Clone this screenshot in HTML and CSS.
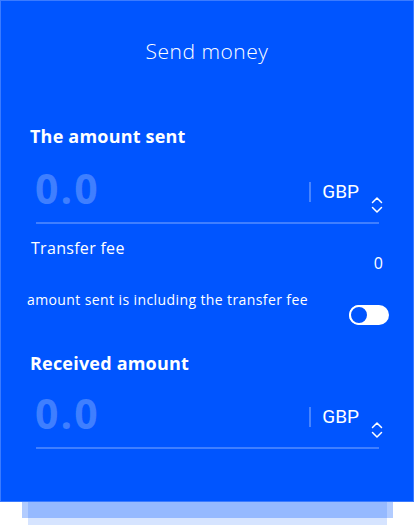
FILE: index.html
```html
<!DOCTYPE html>
<html lang="en">
<head>
<meta charset="utf-8">
<title>Send money</title>
<link rel="stylesheet" href="styles.css">
</head>
<body>
<div class="wrap">
  <div class="card">
    <h1 class="title">Send money</h1>

    <h2 class="label">The amount sent</h2>
    <div class="amount-row">
      <span class="amount">0.0</span>
      <span class="divider"></span>
      <span class="currency">GBP</span>
      <svg class="chev" width="12" height="18" viewBox="0 0 12 18" aria-hidden="true">
        <path d="M1.5 6.5 L6 2 L10.5 6.5" fill="none" stroke="#fff" stroke-width="1.5" stroke-linecap="round" stroke-linejoin="round"/>
        <path d="M1.5 11.5 L6 16 L10.5 11.5" fill="none" stroke="#fff" stroke-width="1.5" stroke-linecap="round" stroke-linejoin="round"/>
      </svg>
    </div>

    <div class="fee">
      <span class="fee-label">Transfer fee</span>
      <span class="fee-value">0</span>
    </div>

    <div class="incl">
      <span class="incl-text">amount sent is including the transfer fee</span>
      <span class="toggle"><span class="knob"></span></span>
    </div>

    <h2 class="label label-2">Received amount</h2>
    <div class="amount-row amount-row-2">
      <span class="amount">0.0</span>
      <span class="divider"></span>
      <span class="currency">GBP</span>
      <svg class="chev" width="12" height="18" viewBox="0 0 12 18" aria-hidden="true">
        <path d="M1.5 6.5 L6 2 L10.5 6.5" fill="none" stroke="#fff" stroke-width="1.5" stroke-linecap="round" stroke-linejoin="round"/>
        <path d="M1.5 11.5 L6 16 L10.5 11.5" fill="none" stroke="#fff" stroke-width="1.5" stroke-linecap="round" stroke-linejoin="round"/>
      </svg>
    </div>
  </div>
  <div class="layer layer-a"></div>
  <div class="layer layer-b"></div>
</div>
</body>
</html>
```

FILE: styles.css
```css
* { box-sizing: border-box; }
html, body { margin: 0; padding: 0; background: #fff; }
body { font-family: "Open Sans", "Liberation Sans", sans-serif; }

.wrap { width: 414px; }

.card {
  position: relative;
  z-index: 1;
  height: 502px;
  background: #0055ff;
  border: 1px solid #3b7bff;
  color: #fff;
  padding: 36px 24px 0 29px;
  display: flex;
  flex-direction: column;
}

.title {
  margin: 0 -24px 0 -29px;
  text-align: center;
  font-size: 21px;
  font-weight: 300;
  line-height: 28px;
  letter-spacing: 0.5px;
}

.label {
  margin: 59px 0 0 0;
  font-size: 18px;
  font-weight: 700;
  line-height: 24px;
  letter-spacing: 0.2px;
}
.label-2 { margin-top: 26px; }

.amount-row {
  display: flex;
  align-items: flex-start;
  margin: 18px 10px 0 6px;
  height: 58px;
  border-bottom: 2px solid rgba(255,255,255,0.25);
}
.amount-row-2 { margin-top: 16px; }
.amount {
  flex: 1;
  margin-left: -1px;
  font-size: 41px;
  font-weight: 700;
  line-height: 44px;
  letter-spacing: 2px;
  color: rgba(255,255,255,0.25);
}
.divider {
  width: 2px;
  height: 20px;
  margin-top: 16px;
  background: rgba(255,255,255,0.28);
}
.currency {
  margin: 13px 0 0 11px;
  font-family: "Roboto", sans-serif;
  font-size: 19px;
  line-height: 26px;
}
.chev { margin: 30px -4px 0 12px; }

.fee {
  display: flex;
  flex-direction: column;
  margin-top: 13px;
}
.fee-label { font-size: 16px; line-height: 22px; letter-spacing: 0.3px; margin-left: 1px; }
.fee-value { align-self: flex-end; font-size: 16px; line-height: 20px; margin: -6px 6px 0 0; }

.incl {
  display: flex;
  justify-content: space-between;
  align-items: flex-start;
  margin: 17px 0 0 -3px;
}
.incl-text { font-size: 14px; line-height: 20px; letter-spacing: 0.4px; }
.toggle {
  margin-top: 15px;
  width: 40px;
  height: 20px;
  border-radius: 10px;
  background: #fff;
  display: flex;
  align-items: center;
}
.knob {
  width: 20px;
  height: 20px;
  border-radius: 50%;
  background: #0055ff;
  border: 2px solid #fff;
}

.layer { height: 16px; }
.layer-a { margin: 0 21px 0 22px; background: rgba(0,85,255,0.3); }
.layer-b { margin: -16px 27px 0 28px; height: 40px; background: rgba(0,85,255,0.16); }
```
